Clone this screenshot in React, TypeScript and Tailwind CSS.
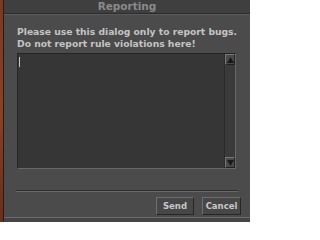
export default function App() {
  return (
    <div className="flex h-[222px] w-[250px] bg-[#4a4a4a] font-['DejaVu_Sans',sans-serif]">
      <div className="w-[3px] bg-gradient-to-b from-[#7a3a1e] via-[#8a4222] to-[#6a2e1a]" />
      <div className="flex flex-1 flex-col border-l border-[#1e1e1e] bg-[#4b4b4b]">
        <div className="flex h-[14px] items-center justify-center border-b border-[#2c2c2c] bg-[#3f3f3f]">
          <span className="text-[10.5px] font-bold leading-none text-[#8a8a8a]">Reporting</span>
        </div>
        <div className="h-px bg-[#5a5a5a]" />
        <div className="flex flex-1 flex-col border-b border-[#6a6a6a] px-[12px]">
          <p className="mt-[11px] pl-[1px] text-[9.2px] font-bold leading-[12px] text-[#c4c4c4]">
            Please use this dialog only to report bugs.
            <br />
            Do not report rule violations here!
          </p>
          <div className="mt-[3px] ml-[1px] mr-[2px] flex h-[116px] border border-t-[#242424] border-l-[#242424] border-r-[#686868] border-b-[#686868] bg-[#363636]">
            <div className="flex-1 pl-[1px] pt-[3px]">
              <div className="h-[10px] w-px bg-[#c8c8c8]" />
            </div>
            <div className="flex w-[11px] flex-col justify-between border-l border-[#2a2a2a] bg-[#3a3a3a]">
              <div className="flex h-[11px] items-center justify-center border border-t-[#777] border-l-[#777] border-r-[#222] border-b-[#222] bg-[#4a4a4a]">
                <svg width="7" height="6" viewBox="0 0 7 6">
                  <path d="M3.5 0 L7 6 L0 6 Z" fill="#1a1a1a" />
                </svg>
              </div>
              <div className="flex h-[11px] items-center justify-center border border-t-[#777] border-l-[#777] border-r-[#222] border-b-[#222] bg-[#4a4a4a]">
                <svg width="7" height="6" viewBox="0 0 7 6">
                  <path d="M0 0 L7 0 L3.5 6 Z" fill="#1a1a1a" />
                </svg>
              </div>
            </div>
          </div>
          <div className="mt-[21px] h-[2px] border-t border-[#2e2e2e] border-b border-b-[#6a6a6a]" />
          <div className="mt-[5px] -mr-[3px] flex justify-end gap-[8px]">
            <button className="flex h-[18px] w-[38px] items-center justify-center border border-t-[#6e6e6e] border-l-[#6e6e6e] border-r-[#262626] border-b-[#262626] bg-[#474747] text-[8.5px] font-bold text-[#c8c8c8]">
              Send
            </button>
            <button className="flex h-[18px] w-[39px] items-center justify-center border border-t-[#6e6e6e] border-l-[#6e6e6e] border-r-[#262626] border-b-[#262626] bg-[#474747] text-[8.5px] font-bold text-[#c8c8c8]">
              Cancel
            </button>
          </div>
        </div>
        <div className="h-[4px] bg-[#454545]" />
      </div>
    </div>
  );
}
